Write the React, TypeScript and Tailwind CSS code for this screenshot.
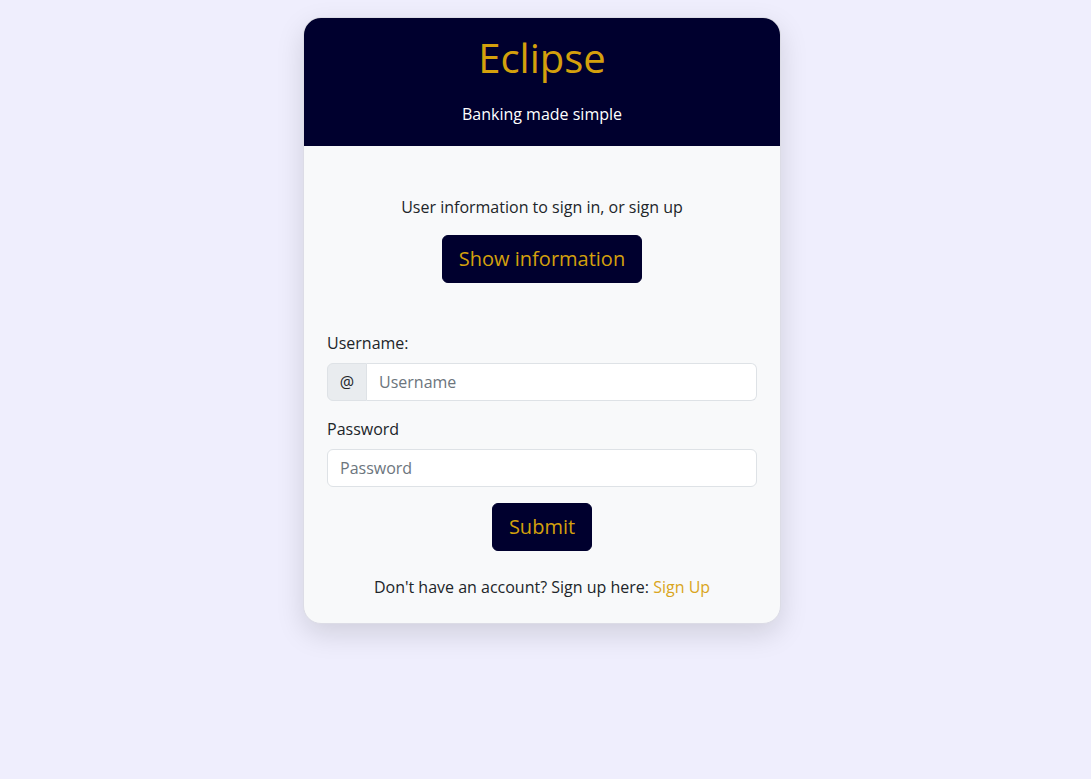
import React from "react";

export default function App() {
  return (
    <div
      className="min-h-screen w-full bg-[#efeefd] flex justify-center pr-[7px] pt-[17px]"
      style={{ fontFamily: '"Open Sans", "Noto Sans", sans-serif' }}
    >
      <div className="w-[478px] h-fit rounded-[18px] overflow-hidden border border-[#dcdce6] bg-[#f8f9fa] shadow-[0_10px_28px_rgba(0,0,0,0.13)]">
        <div className="bg-[#00002e] pt-4 pb-5 text-center">
          <h1 className="text-[40px] leading-[48px] text-[#d4a00c] mb-5">Eclipse</h1>
          <p className="text-white text-[16px] leading-6">Banking made simple</p>
        </div>
        <div className="px-[23px] pt-[49px] pb-6 text-[#212529] text-[16px] leading-6">
          <p className="text-center">User information to sign in, or sign up</p>
          <div className="flex justify-center mt-4">
            <button className="bg-[#00002e] text-[#d4a00c] text-[20px] leading-[30px] px-4 py-2 rounded-[6px] border border-[#00002e] whitespace-nowrap">
              Show information
            </button>
          </div>
          <label className="block mt-12 mb-2">Username:</label>
          <div className="flex h-[38px] w-full">
            <span className="flex items-center justify-center w-10 bg-[#e9ecef] border border-[#dee2e6] rounded-l-[6px] text-[16px]">@</span>
            <input
              className="flex-1 bg-white border border-l-0 border-[#dee2e6] rounded-r-[6px] px-3 text-[16px] placeholder:text-[#6c757d] outline-none"
              placeholder="Username"
            />
          </div>
          <label className="block mt-4 mb-2">Password</label>
          <input
            type="password"
            className="block w-full h-[38px] bg-white border border-[#dee2e6] rounded-[6px] px-3 text-[16px] placeholder:text-[#6c757d] outline-none"
            placeholder="Password"
          />
          <div className="flex justify-center mt-4">
            <button className="bg-[#00002e] text-[#d4a00c] text-[20px] leading-[30px] px-4 py-2 rounded-[6px] border border-[#00002e] whitespace-nowrap">
              Submit
            </button>
          </div>
          <p className="text-center mt-6">
            Don't have an account? Sign up here: <a className="text-[#daa520]">Sign Up</a>
          </p>
        </div>
      </div>
    </div>
  );
}
